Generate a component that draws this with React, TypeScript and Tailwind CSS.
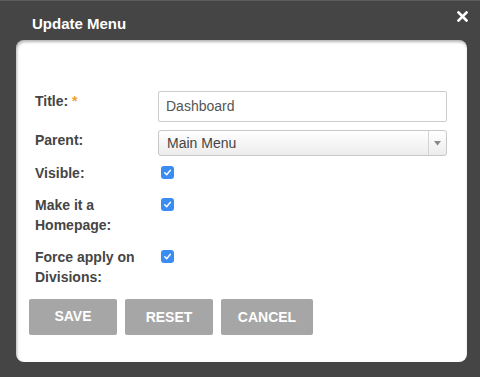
import React from 'react';

function Check() {
  return (
    <span className="w-[13px] h-[13px] rounded-[3px] bg-[#3a8cf2] flex items-center justify-center mt-[3px] ml-[3px]">
      <svg width="9" height="9" viewBox="0 0 10 10" fill="none">
        <path d="M2 5.3 L4.1 7.4 L8.2 2.6" stroke="white" strokeWidth="1.6" strokeLinecap="round" strokeLinejoin="round" />
      </svg>
    </span>
  );
}

export default function App() {
  const labelCls = 'w-[123px] shrink-0 text-[14px] leading-[20px] font-bold text-[#454545]';
  const btnCls = 'h-[36px] rounded-[2px] bg-[#a6a6a6] text-white text-[14px] font-bold uppercase flex items-center justify-center';

  return (
    <div className="w-[480px] h-[377px] bg-[#454545] border-t border-[#5c5c5c] flex flex-col" style={{ fontFamily: '"Liberation Sans", Arial, sans-serif' }}>
      <div className="h-[39px] flex items-start justify-between pl-[32px] pr-[12px]">
        <h1 className="text-[15px] leading-[20px] font-bold text-white mt-[13px]">Update Menu</h1>
        <svg width="11" height="11" viewBox="0 0 11 11" className="mt-[10px]">
          <path d="M1.5 1.5 L9.5 9.5 M9.5 1.5 L1.5 9.5" stroke="white" strokeWidth="2.6" strokeLinecap="square" />
        </svg>
      </div>

      <div className="ml-[16px] w-[451px] h-[322px] bg-white rounded-[8px] shadow-[inset_1px_2px_3px_rgba(0,0,0,0.3)] pl-[19px] pr-[20px] pt-[51px] flex flex-col">
        <div className="flex items-start">
          <div className={labelCls}>
            Title: <span className="text-[#f0a030]">*</span>
          </div>
          <div className="flex-1 h-[31px] border border-[#cccccc] rounded-[2px] flex items-center pl-[7px] text-[14px] text-[#555555]">
            Dashboard
          </div>
        </div>

        <div className="flex items-start mt-[8px]">
          <div className={labelCls}>Parent:</div>
          <div className="flex-1 h-[26px] border border-[#c8c8c8] rounded-[3px] bg-gradient-to-b from-white to-[#ececec] flex items-center text-[14px] text-[#444444]">
            <span className="flex-1 pl-[8px]">Main Menu</span>
            <span className="w-[18px] h-full border-l border-[#d4d4d4] flex items-center justify-center">
              <svg width="7" height="5" viewBox="0 0 7 5">
                <path d="M0 0 L7 0 L3.5 4.5 Z" fill="#888888" />
              </svg>
            </span>
          </div>
        </div>

        <div className="flex items-start mt-[7px]">
          <div className={labelCls}>Visible:</div>
          <Check />
        </div>

        <div className="flex items-start mt-[12px]">
          <div className={labelCls}>
            Make it a<br />Homepage:
          </div>
          <Check />
        </div>

        <div className="flex items-start mt-[12px]">
          <div className={labelCls}>
            Force apply on<br />Divisions:
          </div>
          <Check />
        </div>

        <div className="flex gap-[8px] mt-[12px] -ml-[6px]">
          <button className={`${btnCls} w-[88px] pb-[2px]`}>Save</button>
          <button className={`${btnCls} w-[88px]`}>Reset</button>
          <button className={`${btnCls} w-[92px]`}>Cancel</button>
        </div>
      </div>
    </div>
  );
}
